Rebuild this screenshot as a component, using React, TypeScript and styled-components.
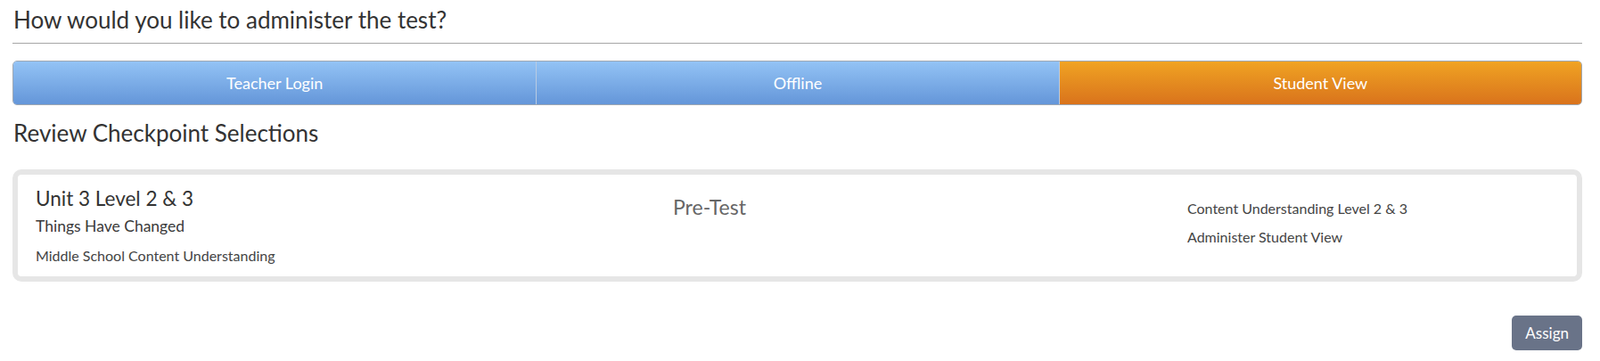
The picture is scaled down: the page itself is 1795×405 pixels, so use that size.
import React from 'react';
import styled, { createGlobalStyle } from 'styled-components';

const GlobalStyle = createGlobalStyle`
  body {
    margin: 0;
    background: #fff;
    font-family: Lato, "Open Sans", Arial, sans-serif;
    color: #333;
  }
  * {
    box-sizing: border-box;
  }
`;

const Page = styled.div`
  padding: 7px 20px 12px 14px;
`;

const Heading = styled.h2`
  margin: 0 0 0 1px;
  font-size: 26px;
  font-weight: 400;
  line-height: 1.2;
  color: #333;
`;

const Rule = styled.hr`
  margin: 10px 0 19px;
  border: 0;
  border-top: 1px solid #a6a6a6;
`;

const ModeBar = styled.div`
  display: grid;
  grid-template-columns: repeat(3, 1fr);
  height: 50px;
  border: 1px solid #9fa8b3;
  border-radius: 5px;
  overflow: hidden;
`;

const ModeButton = styled.button<{ $active?: boolean }>`
  border: 0;
  border-left: 1px solid #b9cbe2;
  margin: 0;
  padding: 0;
  font-family: inherit;
  font-size: 18px;
  color: #fff;
  cursor: pointer;
  background: ${(p) =>
    p.$active
      ? 'linear-gradient(to bottom, #f0a323, #d9731c)'
      : 'linear-gradient(to bottom, #93c3f5, #6496d9)'};
  &:first-child {
    border-left: 0;
  }
`;

const SubHeading = styled(Heading)`
  margin-top: 16px;
`;

const Card = styled.div`
  margin-top: 25px;
  height: 126px;
  border: 6px solid #e6e6e6;
  border-radius: 10px;
  background: #fff;
`;

const CardBody = styled.div`
  display: grid;
  grid-template-columns: 715px 577px 1fr;
  padding: 13px 20px 0 20px;
`;

const Column = styled.div<{ $top?: number }>`
  display: flex;
  flex-direction: column;
  padding-top: ${(p) => p.$top ?? 0}px;
`;

const UnitTitle = styled.div`
  font-size: 22.5px;
  line-height: 1.2;
  color: #333;
`;

const Subtitle = styled.div`
  font-size: 17.5px;
  line-height: 1.2;
  margin-top: 7px;
  color: #3a3a3a;
`;

const Small = styled.div<{ $gap?: number }>`
  font-size: 16px;
  line-height: 1.2;
  margin-top: ${(p) => p.$gap ?? 0}px;
  color: #444;
`;

const TestType = styled.div`
  font-size: 23px;
  line-height: 1.2;
  color: #666;
`;

const Footer = styled.div`
  display: flex;
  justify-content: flex-end;
  margin-top: 38px;
`;

const AssignButton = styled.button`
  height: 39px;
  padding: 0 15px;
  border: 0;
  border-radius: 5px;
  background: #697388;
  color: #fff;
  font-family: inherit;
  font-size: 17px;
  cursor: pointer;
`;

const modes = ['Teacher Login', 'Offline', 'Student View'];

export default function App() {
  return (
    <>
      <GlobalStyle />
      <Page>
        <Heading>How would you like to administer the test?</Heading>
        <Rule />
        <ModeBar>
          {modes.map((m) => (
            <ModeButton key={m} $active={m === 'Student View'}>
              {m}
            </ModeButton>
          ))}
        </ModeBar>
        <SubHeading>Review Checkpoint Selections</SubHeading>
        <Card>
          <CardBody>
            <Column>
              <UnitTitle>Unit 3 Level 2 &amp; 3</UnitTitle>
              <Subtitle>Things Have Changed</Subtitle>
              <Small $gap={13}>Middle School Content Understanding</Small>
            </Column>
            <Column $top={10}>
              <TestType>Pre-Test</TestType>
            </Column>
            <Column $top={15}>
              <Small>Content Understanding Level 2 &amp; 3</Small>
              <Small $gap={12}>Administer Student View</Small>
            </Column>
          </CardBody>
        </Card>
        <Footer>
          <AssignButton>Assign</AssignButton>
        </Footer>
      </Page>
    </>
  );
}
